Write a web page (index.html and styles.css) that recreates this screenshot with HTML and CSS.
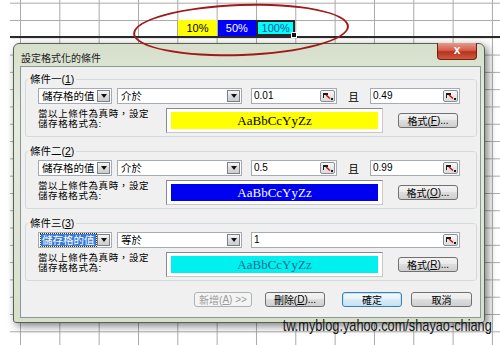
FILE: index.html
```html
<!DOCTYPE html>
<html lang="zh-Hant">
<head>
    <meta charset="UTF-8">
    <meta name="viewport" content="width=device-width, initial-scale=1.0">
    <title>設定格式化的條件</title>
    <link rel="stylesheet" href="styles.css">
</head>
<body>
    <!-- Worksheet behind the dialog -->
    <div class="sheet">
        <div class="sheet-row">
            <div class="cell c-yellow">10%</div>
            <div class="cell c-blue">50%</div>
            <div class="cell c-cyan active">100%</div>
        </div>
    </div>

    <!-- Conditional formatting dialog -->
    <div class="dialog">
        <div class="titlebar">
            <span class="title">設定格式化的條件</span>
            <span class="close">x</span>
        </div>
        <div class="panel">
            <fieldset class="cond">
                <legend>條件一(<u>1</u>)</legend>
                <div class="cond-row">
                    <div class="combo w-kind"><span class="val">儲存格的值</span><span class="drop"></span></div>
                    <div class="combo w-op"><span class="val">介於</span><span class="drop"></span></div>
                    <div class="field w-from"><span class="val">0.01</span><span class="ref"><svg width="12" height="9" viewBox="0 0 12 9"><rect x="1" y="1" width="5" height="2" fill="#1a1a1a"/><rect x="1" y="1" width="1" height="5" fill="#1a1a1a"/><path d="M4 3 L8 6.5" stroke="#d01010" stroke-width="1.6"/><rect x="9" y="6" width="2" height="2" fill="#1a1a1a"/></svg></span></div>
                    <span class="and">且</span>
                    <div class="field w-to"><span class="val">0.49</span><span class="ref"><svg width="12" height="9" viewBox="0 0 12 9"><rect x="1" y="1" width="5" height="2" fill="#1a1a1a"/><rect x="1" y="1" width="1" height="5" fill="#1a1a1a"/><path d="M4 3 L8 6.5" stroke="#d01010" stroke-width="1.6"/><rect x="9" y="6" width="2" height="2" fill="#1a1a1a"/></svg></span></div>
                </div>
                <div class="cond-row tall">
                    <div class="hint">當以上條件為真時，設定<br>儲存格格式為:</div>
                    <div class="preview"><div class="swatch s-yellow">AaBbCcYyZz</div></div>
                    <div class="btn fmt">格式(<u>F</u>)...</div>
                </div>
            </fieldset>

            <fieldset class="cond">
                <legend>條件二(<u>2</u>)</legend>
                <div class="cond-row">
                    <div class="combo w-kind"><span class="val">儲存格的值</span><span class="drop"></span></div>
                    <div class="combo w-op"><span class="val">介於</span><span class="drop"></span></div>
                    <div class="field w-from"><span class="val">0.5</span><span class="ref"><svg width="12" height="9" viewBox="0 0 12 9"><rect x="1" y="1" width="5" height="2" fill="#1a1a1a"/><rect x="1" y="1" width="1" height="5" fill="#1a1a1a"/><path d="M4 3 L8 6.5" stroke="#d01010" stroke-width="1.6"/><rect x="9" y="6" width="2" height="2" fill="#1a1a1a"/></svg></span></div>
                    <span class="and">且</span>
                    <div class="field w-to"><span class="val">0.99</span><span class="ref"><svg width="12" height="9" viewBox="0 0 12 9"><rect x="1" y="1" width="5" height="2" fill="#1a1a1a"/><rect x="1" y="1" width="1" height="5" fill="#1a1a1a"/><path d="M4 3 L8 6.5" stroke="#d01010" stroke-width="1.6"/><rect x="9" y="6" width="2" height="2" fill="#1a1a1a"/></svg></span></div>
                </div>
                <div class="cond-row tall">
                    <div class="hint">當以上條件為真時，設定<br>儲存格格式為:</div>
                    <div class="preview"><div class="swatch s-blue">AaBbCcYyZz</div></div>
                    <div class="btn fmt">格式(<u>O</u>)...</div>
                </div>
            </fieldset>

            <fieldset class="cond">
                <legend>條件三(<u>3</u>)</legend>
                <div class="cond-row">
                    <div class="combo w-kind"><span class="val sel">儲存格的值</span><span class="drop"></span></div>
                    <div class="combo w-op"><span class="val">等於</span><span class="drop"></span></div>
                    <div class="field w-wide"><span class="val">1</span><span class="ref"><svg width="12" height="9" viewBox="0 0 12 9"><rect x="1" y="1" width="5" height="2" fill="#1a1a1a"/><rect x="1" y="1" width="1" height="5" fill="#1a1a1a"/><path d="M4 3 L8 6.5" stroke="#d01010" stroke-width="1.6"/><rect x="9" y="6" width="2" height="2" fill="#1a1a1a"/></svg></span></div>
                </div>
                <div class="cond-row tall">
                    <div class="hint">當以上條件為真時，設定<br>儲存格格式為:</div>
                    <div class="preview"><div class="swatch s-cyan">AaBbCcYyZz</div></div>
                    <div class="btn fmt">格式(<u>R</u>)...</div>
                </div>
            </fieldset>

            <div class="actions">
                <div class="btn b-add disabled">新增(<u>A</u>) &gt;&gt;</div>
                <div class="btn b-del">刪除(<u>D</u>)...</div>
                <div class="btn b-ok default">確定</div>
                <div class="btn b-cancel">取消</div>
            </div>
        </div>
    </div>

    <!-- Red hand-drawn ring around the sample cells -->
    <div class="mark"></div>

    <div class="credit">tw.myblog.yahoo.com/shayao-chiang</div>
</body>
</html>
```

FILE: styles.css
```css
body {
    margin: 0;
    width: 500px;
    height: 345px;
    position: relative;
    overflow: hidden;
    background: #fff;
    font-family: "Liberation Sans", "Noto Sans CJK TC", sans-serif;
    font-size: 10px;
    color: #000;
}

/* worksheet grid */
.sheet {
    margin-left: 10px;
    height: 345px;
    box-sizing: border-box;
    padding-top: 20px;
    background-image:
        linear-gradient(to right, #a8a8a8 1px, transparent 1px),
        linear-gradient(to bottom, #a8a8a8 1px, transparent 1px);
    background-size: 39.333px 17.3px;
    background-position: 10px 0, 0 2.7px;
}
.sheet-row {
    display: flex;
    height: 16px;
    padding-left: 167.333px;
    border-bottom: 2px solid #2a2a2a;
}
.cell {
    width: 39.333px;
    box-sizing: border-box;
    border-left: 1px solid #a8a8a8;
    font-size: 11px;
    line-height: 16px;
    text-align: center;
    position: relative;
}
.c-yellow { background: #ffff00; }
.c-blue { background: #0000ff; color: #fff; }
.c-cyan { background: #00ffff; color: #1f4f8f; }
.cell.active {
    border: 2px solid #262626;
    line-height: 12px;
}
.cell.active::after {
    content: "";
    position: absolute;
    right: -4px;
    bottom: -4px;
    width: 4px;
    height: 4px;
    background: #111;
    border: 1px solid #fff;
}

/* dialog window */
.dialog {
    position: absolute;
    left: 13px;
    top: 43px;
    width: 472px;
    height: 280px;
    box-sizing: border-box;
    display: flex;
    flex-direction: column;
    padding: 0 3px 4px 6px;
    border: 1px solid #59614f;
    border-radius: 6px 6px 3px 3px;
    background: linear-gradient(#d6dfcb, #e6ece0 25%, #dfe6d6 60%, #d7dfcc);
    box-shadow: 3px 3px 9px rgba(0, 0, 0, 0.5);
}
.titlebar {
    height: 22px;
    display: flex;
    align-items: flex-start;
}
.title {
    margin: 9px 0 0 1px;
    font-size: 10px;
    line-height: 11px;
    color: #1b1b1b;
}
.close {
    margin: -1px 4px 0 auto;
    width: 40px;
    height: 17px;
    box-sizing: border-box;
    border: 1px solid #6b2218;
    border-top: 0;
    border-radius: 0 0 4px 4px;
    background: linear-gradient(#e59a8c, #d4604c 45%, #b8321e 55%, #cf5a3e);
    color: #fff;
    font-weight: bold;
    font-size: 12px;
    line-height: 14px;
    text-align: center;
}
.panel {
    flex: 1;
    background: #f0f0f0;
    border: 1px solid #8e979a;
    padding: 0 3px 0 4px;
}

/* condition groups */
.cond {
    margin: 8px 0 0;
    padding: 2px 16px 3px 12px;
    border: 1px solid #d3dade;
    border-radius: 3px;
    min-width: 0;
}
.cond:first-child {
    margin-top: 6px;
}
.cond legend {
    margin-left: -10px;
    padding: 0 2px;
    font-size: 10.5px;
    line-height: 13px;
}
.cond-row {
    display: flex;
    align-items: center;
    height: 16px;
}
.cond-row.tall {
    height: 25px;
    margin-top: 4px;
}

.combo, .field {
    height: 16px;
    box-sizing: border-box;
    display: flex;
    align-items: center;
    background: #fff;
    border: 1px solid #a5acb5;
}
.val {
    flex: 1;
    padding-left: 3px;
    font-size: 10.5px;
    line-height: 12px;
    white-space: nowrap;
}
.field .val {
    padding-left: 2px;
    font-size: 10px;
}
.val.sel {
    margin: 1px 1px 1px 2px;
    padding-left: 1px;
    background: #3a7bd6;
    color: #fff;
    outline: 1px dotted #333;
}
.drop {
    width: 13px;
    height: 12px;
    margin-right: 1px;
    box-sizing: border-box;
    border: 1px solid #7c7f83;
    background: linear-gradient(#f6f6f6, #dcdcdc 50%, #cdcdcd);
    display: flex;
    align-items: center;
    justify-content: center;
}
.drop::after {
    content: "";
    border-top: 4px solid #111;
    border-left: 3px solid transparent;
    border-right: 3px solid transparent;
}
.ref {
    width: 15px;
    height: 12px;
    margin-right: 1px;
    box-sizing: border-box;
    border: 1px solid #8b8f93;
    border-radius: 2px;
    background: linear-gradient(#f8f8f8, #dadada);
    display: flex;
    align-items: center;
    justify-content: center;
}
.w-kind { width: 74px; }
.w-op { width: 125px; margin-left: 5px; }
.w-from { width: 86px; margin-left: 9px; }
.w-to { width: 90px; }
.w-wide { width: 209px; margin-left: 9px; }
.and {
    width: 33px;
    text-align: center;
    font-size: 11px;
}

.hint {
    width: 128px;
    align-self: flex-start;
    padding-top: 1px;
    font-size: 9.5px;
    line-height: 10px;
    letter-spacing: 0.6px;
}
.preview {
    width: 217px;
    height: 25px;
    box-sizing: border-box;
    padding: 3px 4px;
    background: #fff;
    border: 1px solid #8a8a8a;
    border-right-color: #c8c8c8;
    border-bottom-color: #c8c8c8;
}
.swatch {
    height: 100%;
    display: flex;
    align-items: center;
    justify-content: center;
    font-family: "Liberation Serif", serif;
    font-size: 13px;
}
.s-yellow { background: #ffff00; }
.s-blue { background: #0000f0; color: #fff; }
.s-cyan { background: #00f0f0; color: #1a6a8a; }

/* push buttons */
.btn {
    height: 15px;
    box-sizing: border-box;
    display: flex;
    align-items: center;
    justify-content: center;
    border: 1px solid #707070;
    border-radius: 3px;
    background: linear-gradient(#f3f3f3, #ebebeb 45%, #dddddd 50%, #cfcfcf);
    font-size: 10px;
    white-space: nowrap;
}
.btn.fmt {
    width: 60px;
    margin-left: 15px;
}
.btn.disabled {
    color: #9a9a9a;
    border-color: #adb2b5;
    background: #f4f4f4;
}
.btn.default {
    border-color: #3c7fb1;
    box-shadow: inset 0 0 0 1px #bfe3f7;
    background: linear-gradient(#f4f9fc, #e8f3fa 45%, #d8ebf6 50%, #c9e2f2);
}
.actions {
    display: flex;
    justify-content: flex-end;
    margin-top: 11px;
    padding-right: 5px;
}
.b-add { width: 58px; margin-right: 13px; }
.b-del { width: 60px; margin-right: 17px; }
.b-ok { width: 60px; margin-right: 9px; }
.b-cancel { width: 61px; }

/* overlays */
.mark {
    position: absolute;
    left: 133px;
    top: 4px;
    width: 216px;
    height: 52px;
    box-sizing: border-box;
    border: 2px solid #a11a1a;
    border-radius: 50%;
    transform: rotate(-2deg);
}
.credit {
    position: absolute;
    right: 8px;
    top: 316px;
    font-family: "Liberation Sans", sans-serif;
    font-size: 17px;
    line-height: 20px;
    color: #151515;
    white-space: nowrap;
    transform: scaleX(0.75);
    transform-origin: right center;
}
```
